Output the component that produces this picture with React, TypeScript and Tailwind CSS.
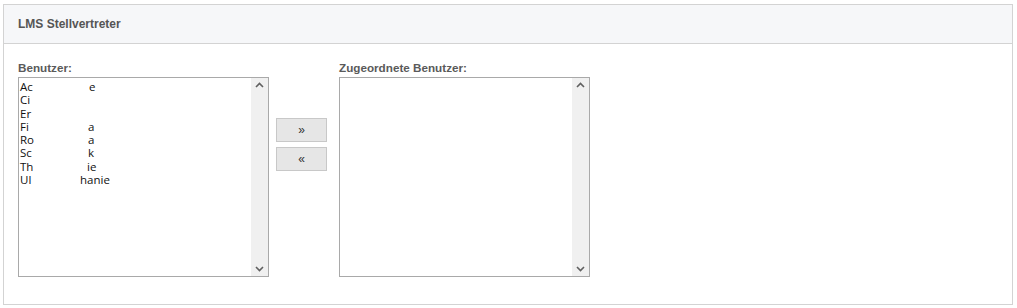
import React from "react";

const items: [string, string, number][] = [
  ["Ac", "e", 88],
  ["Ci", "", 0],
  ["Er", "", 0],
  ["Fi", "a", 87],
  ["Ro", "a", 87],
  ["Sc", "k", 87],
  ["Th", "ie", 86],
  ["Ul", "hanie", 79],
];

function ScrollBar() {
  return (
    <div className="flex h-full w-[17px] flex-col items-center justify-between bg-[#f0f0f0] py-[3px]">
      <svg width="9" height="6" viewBox="0 0 9 6" className="mt-[1px]">
        <path d="M1 5 L4.5 1.5 L8 5" fill="none" stroke="#606060" strokeWidth="1.6" />
      </svg>
      <svg width="9" height="6" viewBox="0 0 9 6" className="mb-[1px]">
        <path d="M1 1 L4.5 4.5 L8 1" fill="none" stroke="#606060" strokeWidth="1.6" />
      </svg>
    </div>
  );
}

function ListBox({ children }: { children?: React.ReactNode }) {
  return (
    <div className="flex h-[200px] w-[251px] border border-[#a9a9a9] bg-white">
      <div className="relative flex-1 pl-[1px] pt-[2px]">{children}</div>
      <ScrollBar />
    </div>
  );
}

export default function App() {
  return (
    <div className="h-[308px] w-[1017px] bg-white pl-[3px] pt-[4px]" style={{ fontFamily: '"Liberation Sans", Arial, sans-serif' }}>
      <div className="h-[301px] w-[1010px] border border-[#d3d3d3] bg-white">
        <div className="flex h-[39px] items-center border-b border-[#d3d3d3] bg-[#f6f7f9] pl-[14px] text-[12px] font-bold text-[#555555]">
          LMS Stellvertreter
        </div>
        <div className="flex items-start pl-[14px] pt-[17px]">
          <div className="flex flex-col">
            <div className="mb-[2px] h-[14px] text-[11.7px] font-bold leading-[14px] text-[#5a5a5a]">Benutzer:</div>
            <ListBox>
              {items.map(([a, b, x], i) => (
                <div key={i} className="relative h-[13.3px] text-[11.5px] leading-[13.3px] text-[#111]" style={{ fontFamily: '"Open Sans", "Noto Sans", sans-serif' }}>
                  <span className="whitespace-nowrap">{a}</span>
                  {b && (
                    <span className="absolute top-0 whitespace-nowrap" style={{ left: x - 19 }}>
                      {b}
                    </span>
                  )}
                </div>
              ))}
            </ListBox>
          </div>
          <div className="ml-[7px] mt-[57px] flex flex-col gap-[5px]">
            <button className="flex h-[24px] w-[51px] items-center justify-center border border-[#c8c8c8] bg-[#e6e6e6] text-[12px] leading-none text-[#333]">»</button>
            <button className="flex h-[24px] w-[51px] items-center justify-center border border-[#c8c8c8] bg-[#e6e6e6] text-[12px] leading-none text-[#333]">«</button>
          </div>
          <div className="ml-[12px] flex flex-col">
            <div className="mb-[2px] h-[14px] text-[11.7px] font-bold leading-[14px] text-[#5a5a5a]">Zugeordnete Benutzer:</div>
            <ListBox />
          </div>
        </div>
      </div>
    </div>
  );
}
